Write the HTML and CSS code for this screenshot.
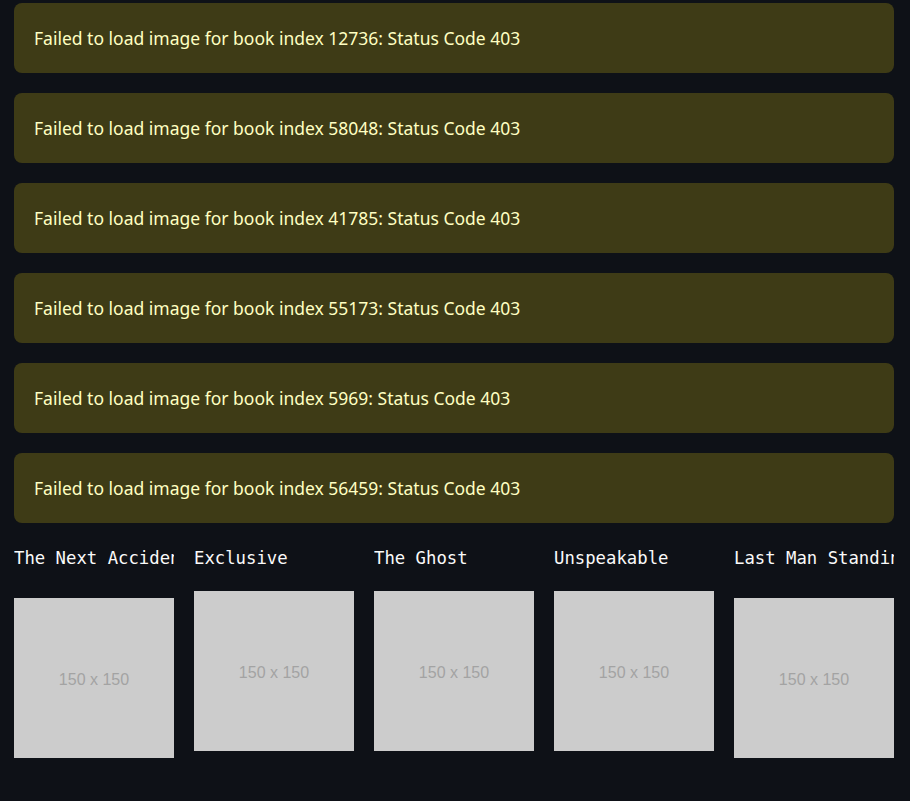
FILE: index.html
```html
<!DOCTYPE html>
<html>
<head>
<meta charset="utf-8">
<link rel="stylesheet" href="styles.css">
</head>
<body>
<main class="page">
  <div class="alert">Failed to load image for book index 12736: Status Code 403</div>
  <div class="alert">Failed to load image for book index 58048: Status Code 403</div>
  <div class="alert">Failed to load image for book index 41785: Status Code 403</div>
  <div class="alert">Failed to load image for book index 55173: Status Code 403</div>
  <div class="alert">Failed to load image for book index 5969: Status Code 403</div>
  <div class="alert">Failed to load image for book index 56459: Status Code 403</div>
  <div class="books">
    <div class="book low">
      <div class="title">The Next Accident</div>
      <div class="cover">150 x 150</div>
    </div>
    <div class="book">
      <div class="title">Exclusive</div>
      <div class="cover">150 x 150</div>
    </div>
    <div class="book">
      <div class="title">The Ghost</div>
      <div class="cover">150 x 150</div>
    </div>
    <div class="book">
      <div class="title">Unspeakable</div>
      <div class="cover">150 x 150</div>
    </div>
    <div class="book low">
      <div class="title">Last Man Standing</div>
      <div class="cover">150 x 150</div>
    </div>
  </div>
</main>
</body>
</html>
```
FILE: styles.css
```css
html, body {
  margin: 0;
  padding: 0;
  background: #0e1117;
  height: 100%;
}
.page {
  width: 880px;
  padding: 3px 0 0 14px;
  display: flex;
  flex-direction: column;
  gap: 20px;
}
.alert {
  height: 70px;
  box-sizing: border-box;
  background: #3e3b16;
  border-radius: 8px;
  padding: 0 20px;
  display: flex;
  align-items: center;
  color: #ffffc2;
  font-family: "Noto Sans", sans-serif;
  font-size: 17.5px;
}
.books {
  display: flex;
  gap: 20px;
  margin-top: 4px;
}
.book {
  width: 160px;
  display: flex;
  flex-direction: column;
}
.title {
  font-family: "DejaVu Sans Mono", monospace;
  font-size: 17.3px;
  color: #fafafa;
  white-space: nowrap;
  overflow: hidden;
  height: 22px;
  line-height: 22px;
}
.cover {
  width: 160px;
  height: 160px;
  box-sizing: border-box;
  padding-top: 3px;
  background: #cccccc;
  color: #a3a3a3;
  font-family: "Liberation Sans", Arial, sans-serif;
  font-size: 16px;
  display: flex;
  align-items: center;
  justify-content: center;
  margin-top: 22px;
}
.book.low .cover {
  margin-top: 29px;
}
```
